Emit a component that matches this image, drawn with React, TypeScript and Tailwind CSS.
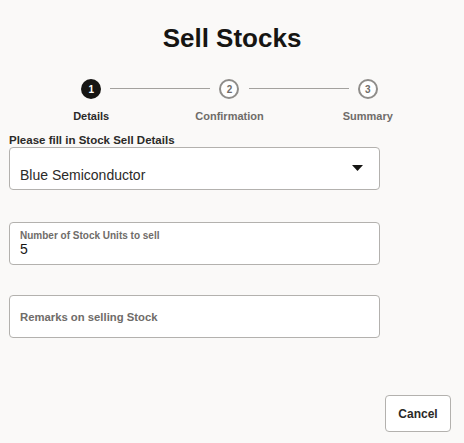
import React from "react";

const STEPS = [
  { n: 1, label: "Details", active: true },
  { n: 2, label: "Confirmation", active: false },
  { n: 3, label: "Summary", active: false },
];

function Stepper() {
  return (
    <div className="ml-[22px] mt-[25px] flex w-[415px]">
      {STEPS.map((step, i) => (
        <div key={step.n} className="relative flex flex-1 flex-col items-center">
          {i > 0 && (
            <div className="absolute left-[-50px] top-[9px] h-px w-[100px] bg-[#a3a19e]" />
          )}
          {step.active ? (
            <div className="flex h-5 w-5 items-center justify-center rounded-full bg-[#161513] text-[10px] font-bold text-white">
              {step.n}
            </div>
          ) : (
            <div className="flex h-5 w-5 items-center justify-center rounded-full border-2 border-[#8f8d8a] bg-white text-[10px] font-bold text-[#6f6c69]">
              {step.n}
            </div>
          )}
          <div
            className={
              "mt-[10px] text-[11px] font-bold leading-[14px] " +
              (step.active ? "text-[#2b2a28]" : "text-[#6f6c69]")
            }
          >
            {step.label}
          </div>
        </div>
      ))}
    </div>
  );
}

export default function App() {
  return (
    <div
      className="h-[443px] w-[464px] overflow-hidden bg-[#faf9f8] text-[#161513]"
      style={{ fontFamily: '"Liberation Sans", Arial, sans-serif' }}
    >
      <h1 className="pt-[22px] text-center text-[26px] font-bold leading-[32px] text-[#161513]">
        Sell Stocks
      </h1>

      <Stepper />

      <div className="ml-[9px] mt-[10px] w-[371px]">
        <div className="text-[11.5px] font-bold leading-[14px] text-[#2b2a28]">
          Please fill in Stock Sell Details
        </div>

        <div className="flex h-[43px] items-center justify-between rounded-[4px] border border-[#b3b1ae] bg-white pl-[10px] pr-[16px]">
          <span className="mt-[13px] text-[14px] leading-[16px] text-[#2b2a28]">
            Blue Semiconductor
          </span>
          <svg width="11" height="6" viewBox="0 0 11 6" className="mt-[-1px]">
            <path d="M0 0 H11 L5.5 6 Z" fill="#161513" />
          </svg>
        </div>

        <div className="mt-[32px] flex h-[43px] flex-col rounded-[4px] border border-[#b3b1ae] bg-white pl-[10px] pt-[7px]">
          <span className="text-[10px] font-bold leading-[12px] text-[#6f6c69]">
            Number of Stock Units to sell
          </span>
          <span className="text-[14px] leading-[15px] text-[#161513]">5</span>
        </div>

        <div className="mt-[30px] flex h-[43px] items-center rounded-[4px] border border-[#b3b1ae] bg-white pl-[10px]">
          <span className="text-[11.3px] font-bold leading-[14px] text-[#6f6c69]">
            Remarks on selling Stock
          </span>
        </div>
      </div>

      <div className="mr-[13px] mt-[57px] flex justify-end">
        <button className="h-[37px] w-[66px] rounded-[4px] border border-[#b3b1ae] bg-white text-[12px] font-bold text-[#2b2a28]">
          Cancel
        </button>
      </div>
    </div>
  );
}
